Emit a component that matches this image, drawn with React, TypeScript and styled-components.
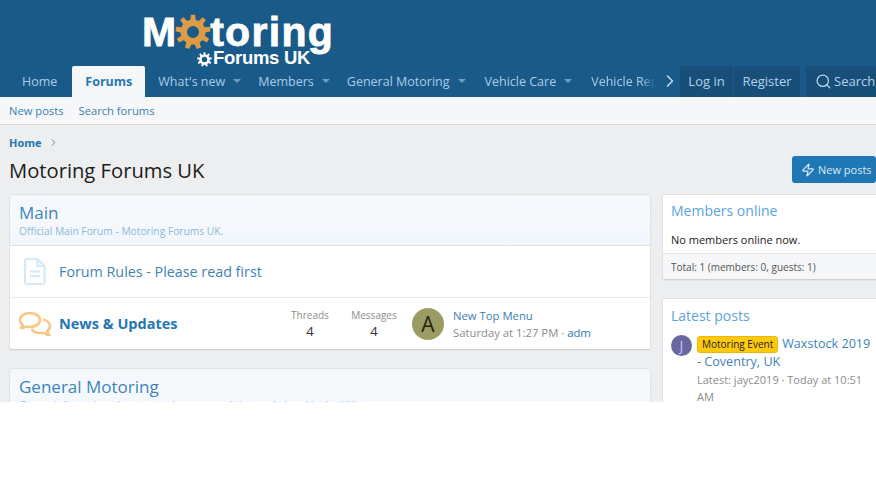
import React from 'react';
import styled, { createGlobalStyle } from 'styled-components';
import { Search, Zap, ChevronRight, ChevronRight as Crumb } from 'lucide-react';

const Global = createGlobalStyle`
  html, body { margin: 0; padding: 0; background: #fff; }
  body { font-family: "Open Sans", "Liberation Sans", sans-serif; font-size: 13px; color: #1c1c1c; }
  * { box-sizing: border-box; }
`;

const Page = styled.div`
  width: 876px;
  height: 402px;
  overflow: hidden;
  background: #eceef0;
`;
const Masthead = styled.header`
  background: #1a5a89;
  height: 97px;
  display: flex;
  flex-direction: column;
`;
const LogoRow = styled.div`
  height: 66px;
  flex: none;
  padding: 9px 0 0 142px;
  position: relative;
  z-index: 2;
  pointer-events: none;
`;
const LogoMain = styled.div`
  display: flex;
  align-items: flex-start;
  height: 41px;
  font: 700 41px/46px "Liberation Sans", Arial, sans-serif;
  color: #fff;
  -webkit-text-stroke: 0.8px #fff;
`;
const LogoGear = styled.svg`
  flex: none;
  width: 36px;
  height: 36px;
  margin: 5px -1px 0 -1px;
`;
const LogoWord = styled.span`
  letter-spacing: 1.3px;
`;
const LogoSub = styled.div`
  display: flex;
  align-items: flex-start;
  gap: 1px;
  margin: 0 0 0 55px;
  font: 700 18.5px/15px "Liberation Sans", Arial, sans-serif;
  letter-spacing: -0.3px;
  color: #fff;
`;
const SmallGear = styled.svg`
  width: 15px;
  height: 15px;
  flex: none;
  margin-top: 2px;
`;
const NavBar = styled.nav`
  height: 31px;
  display: flex;
  align-items: stretch;
  position: relative;
`;
const NavScroll = styled.div`
  width: 647px;
  margin-left: 9px;
  flex: none;
  display: flex;
  overflow: hidden;
  white-space: nowrap;
`;
const NavItem = styled.a<{ $active?: boolean; $after?: number }>`
  flex: none;
  display: flex;
  align-items: center;
  height: 31px;
  padding: 0 13px 1px;
  font-size: 12.5px;
  font-weight: ${p => (p.$active ? 700 : 400)};
  color: ${p => (p.$active ? '#2577b1' : '#a9cce6')};
  background: ${p => (p.$active ? '#f5f7f8' : 'transparent')};
  border-radius: 2px 2px 0 0;
  margin-right: ${p => p.$after ?? 1}px;
`;
const Caret = styled.i`
  width: 0;
  height: 0;
  margin: 0 -10px 0 8px;
  border-left: 4px solid transparent;
  border-right: 4px solid transparent;
  border-top: 4px solid #6f9dbf;
`;
const Fade = styled.span`
  display: inline-block;
  width: 64px;
  overflow: hidden;
  -webkit-mask-image: linear-gradient(to right, #000 80%, transparent 100%);
  mask-image: linear-gradient(to right, #000 80%, transparent 100%);
`;
const NavArrow = styled.div`
  width: 24px;
  flex: none;
  display: flex;
  align-items: center;
  justify-content: center;
  padding: 0 0 1px 4px;
  color: #c4dcee;
`;
const UserGroup = styled.div`
  display: flex;
  gap: 1px;
`;
const UserLink = styled.a<{ $wide?: number }>`
  height: 31px;
  width: ${p => p.$wide}px;
  display: flex;
  align-items: center;
  justify-content: center;
  gap: 2px;
  padding-bottom: 1px;
  background: #174f79;
  color: #b5d2e8;
  font-size: 13px;
  border-radius: 2px 2px 0 0;
  flex: none;
  white-space: nowrap;
`;
const SearchLink = styled(UserLink)`
  margin-left: 6px;
  justify-content: flex-start;
  padding-left: 9px;
  overflow: hidden;
`;
const SubNav = styled.div`
  height: 28px;
  background: #f5f7f8;
  border-bottom: 1px solid #d8d8d8;
  display: flex;
  align-items: center;
  gap: 15px;
  padding: 0 0 1px 9px;
  font-size: 11.2px;
  color: #3c7fb4;
`;
const Body = styled.main`
  width: 920px;
  padding: 0 0 0 9px;
`;
const Crumbs = styled.div`
  display: flex;
  align-items: center;
  gap: 6px;
  height: 17px;
  margin-top: 9px;
  font-size: 11px;
  font-weight: 700;
  color: #2577b1;
`;
const TitleRow = styled.div`
  display: flex;
  align-items: center;
  justify-content: space-between;
  width: 867px;
  height: 27px;
  margin-top: 5px;
`;
const Title = styled.h1`
  margin: 0;
  padding-top: 1px;
  font-size: 20.2px;
  font-weight: 400;
  color: #1c1c1c;
`;
const Primary = styled.a`
  width: 84px;
  height: 27px;
  flex: none;
  display: flex;
  align-items: center;
  gap: 3px;
  padding-left: 9px;
  background: #1f77b4;
  border-radius: 3px;
  color: #dbeaf6;
  font-size: 11px;
  white-space: nowrap;
`;
const Columns = styled.div`
  display: grid;
  grid-template-columns: 642px 250px;
  column-gap: 11px;
  align-items: start;
  margin-top: 11px;
`;
const Stack = styled.div`
  display: flex;
  flex-direction: column;
  gap: 18px;
`;
const Block = styled.section`
  background: #fff;
  border: 1px solid #e2e2e2;
  border-bottom-color: #d2d2d2;
  border-radius: 3px;
  box-shadow: 0 1px 1px rgba(0, 0, 0, 0.05);
`;
const BlockHead = styled.div`
  height: 51px;
  padding: 6px 9px 0;
  background: linear-gradient(#f2f7fc, #f7fafd 40%, #eff6fd);
  border-bottom: 1px solid #e2e2e2;
`;
const BlockTitle = styled.h2`
  margin: 0;
  font-size: 17px;
  line-height: 23px;
  font-weight: 400;
  color: #3d85bd;
`;
const BlockDesc = styled.div`
  font-size: 10.25px;
  line-height: 15px;
  color: #8db8d9;
`;
const Row = styled.div<{ $h: number }>`
  height: ${p => p.$h}px;
  display: flex;
  align-items: center;
  & + & { border-top: 1px solid #ececec; }
`;
const RowIcon = styled.div`
  width: 49px;
  flex: none;
  display: flex;
  justify-content: center;
`;
const RowLink = styled.a<{ $bold?: boolean }>`
  flex: 1;
  font-size: ${p => (p.$bold ? '14.5px' : '14.3px')};
  font-weight: ${p => (p.$bold ? 700 : 400)};
  color: ${p => (p.$bold ? '#2577b1' : '#3c84bb')};
`;
const Stat = styled.div`
  width: 64px;
  flex: none;
  text-align: center;
`;
const StatLabel = styled.div`
  font-size: 10px;
  line-height: 15px;
  color: #8c8c8c;
`;
const StatValue = styled.div`
  font-size: 13px;
  line-height: 16px;
  color: #333;
`;
const Avatar = styled.div<{ $size: number; $bg: string; $fg: string }>`
  width: ${p => p.$size}px;
  height: ${p => p.$size}px;
  border-radius: 50%;
  background: ${p => p.$bg};
  color: ${p => p.$fg};
  font-size: ${p => Math.round(p.$size * 0.66)}px;
  flex: none;
  display: flex;
  align-items: center;
  justify-content: center;
`;
const LastPost = styled.div`
  width: 206px;
  flex: none;
  padding-left: 9px;
  font-size: 11.3px;
  line-height: 17px;
`;
const PostLink = styled.div`
  color: #3c7fb4;
`;
const Muted = styled.div`
  color: #8c8c8c;
`;
const Accent = styled.span`
  color: #2577b1;
`;
const AvatarSlot = styled.div`
  margin-left: 6px;
`;
const SideTitle = styled.h3<{ $top: number }>`
  margin: 0;
  padding: ${p => p.$top}px 8px 0;
  font-size: 14px;
  line-height: 21px;
  font-weight: 400;
  color: #5ba4dc;
`;
const SideText = styled.div`
  padding: 10px 8px 0;
  height: 32px;
  font-size: 11px;
  line-height: 17px;
  color: #222;
`;
const SideFoot = styled.div`
  height: 26px;
  padding: 0 8px;
  display: flex;
  align-items: center;
  background: #f6f7f8;
  border-top: 1px solid #e4e4e4;
  font-size: 10px;
  color: #555;
`;
const PostItem = styled.div`
  display: flex;
  gap: 5px;
  padding: 9px 0 0 8px;
`;
const PostText = styled.div`
  width: 178px;
  font-size: 12.6px;
  line-height: 18px;
  color: #3c84bb;
`;
const Badge = styled.span`
  display: inline-block;
  background: #ffc90e;
  border: 1px solid #e8b90c;
  border-radius: 3px;
  color: #222;
  font-size: 10px;
  line-height: 15px;
  padding: 0 4px;
  margin: -2px 4px -2px 0;
`;
const PostMeta = styled.div`
  width: 176px;
  font-size: 11px;
  line-height: 17px;
  color: #8c8c8c;
`;

function gearPath(cx: number, cy: number, outer: number, root: number, hole: number, teeth: number) {
  const pts: string[] = [];
  const step = (Math.PI * 2) / teeth;
  for (let i = 0; i < teeth; i++) {
    const a = i * step - Math.PI / 2;
    const spec: [number, number][] = [
      [root, a - step * 0.3],
      [outer, a - step * 0.18],
      [outer, a + step * 0.18],
      [root, a + step * 0.3],
    ];
    spec.forEach(([r, t]) => pts.push(`${(cx + r * Math.cos(t)).toFixed(2)} ${(cy + r * Math.sin(t)).toFixed(2)}`));
  }
  const ring = `M${cx - hole} ${cy}a${hole} ${hole} 0 1 0 ${hole * 2} 0a${hole} ${hole} 0 1 0 ${-hole * 2} 0Z`;
  return `M${pts.join('L')}Z${ring}`;
}

const FileIcon = () => (
  <svg width="22" height="29" viewBox="0 0 22 28" fill="none" stroke="#d6e9f8" strokeWidth="2.2">
    <path d="M2.500 1.500h11l7 7v16.500a1.500 1.500 0 0 1-1.500 1.500H2.500A1.500 1.500 0 0 1 1 25V3a1.500 1.500 0 0 1 1.500-1.500Z" />
    <path d="M13.500 1.500v7h7" />
    <path d="M6 14h10M6 18.500h10" />
  </svg>
);
const ChatIcon = () => (
  <svg width="34" height="26" viewBox="0 0 34 26" fill="none" stroke="#f9c785" strokeWidth="2.6" strokeLinejoin="round">
    <path d="M12 2C6 2 2 5.200 2 9c0 2 1 3.700 2.800 5-.4 1.300-1 2.200-2 3 2 0 3.800-.6 5-1.600 1.300.4 2.700.6 4.200.6 5.800 0 10-3.200 10-7S17.800 2 12 2Z" />
    <path d="M25 8.500c4 .8 7 3.400 7 6.500 0 2-1 3.700-2.800 5 .3 1.500 1 2.800 2.300 4-2.500 0-4.500-1-5.800-2.300-1 .2-2.100.3-3.200.3-4 0-7.500-1.600-9-4.200" />
  </svg>
);

export default function App() {
  return (
    <Page>
      <Global />
      <Masthead>
        <LogoRow>
          <LogoMain>
            <span>M</span>
            <LogoGear viewBox="0 0 36 36">
              <path fillRule="evenodd" fill="#dd9b48" d={gearPath(18, 18, 17.5, 12.5, 6, 9)} />
            </LogoGear>
            <LogoWord>toring</LogoWord>
          </LogoMain>
          <LogoSub>
            <SmallGear viewBox="0 0 36 36">
              <path fillRule="evenodd" fill="#fff" d={gearPath(18, 18, 17.5, 12.5, 6.5, 9)} />
            </SmallGear>
            Forums UK
          </LogoSub>
        </LogoRow>
        <NavBar>
          <NavScroll>
            <NavItem $after={2}>Home</NavItem>
            <NavItem $active $after={0}>Forums</NavItem>
            <NavItem>What's new<Caret /></NavItem>
            <NavItem>Members<Caret /></NavItem>
            <NavItem $after={3}>General Motoring<Caret /></NavItem>
            <NavItem $after={3}>Vehicle Care<Caret /></NavItem>
            <NavItem><Fade>Vehicle Repairs</Fade></NavItem>
          </NavScroll>
          <NavArrow><ChevronRight size={20} strokeWidth={1.8} /></NavArrow>
          <UserGroup>
            <UserLink $wide={53}>Log in</UserLink>
            <UserLink $wide={66}>Register</UserLink>
          </UserGroup>
          <SearchLink $wide={70}><Search size={17} strokeWidth={1.8} />Search</SearchLink>
        </NavBar>
      </Masthead>
      <SubNav>
        <span>New posts</span>
        <span>Search forums</span>
      </SubNav>
      <Body>
        <Crumbs>Home <Crumb size={11} color="#777" /></Crumbs>
        <TitleRow>
          <Title>Motoring Forums UK</Title>
          <Primary><Zap size={14} strokeWidth={2} />New posts</Primary>
        </TitleRow>
        <Columns>
          <Stack>
            <Block>
              <BlockHead>
                <BlockTitle>Main</BlockTitle>
                <BlockDesc>Official Main Forum - Motoring Forums UK.</BlockDesc>
              </BlockHead>
              <Row $h={51}>
                <RowIcon><FileIcon /></RowIcon>
                <RowLink>Forum Rules - Please read first</RowLink>
              </Row>
              <Row $h={52}>
                <RowIcon><ChatIcon /></RowIcon>
                <RowLink $bold>News &amp; Updates</RowLink>
                <Stat><StatLabel>Threads</StatLabel><StatValue>4</StatValue></Stat>
                <Stat><StatLabel>Messages</StatLabel><StatValue>4</StatValue></Stat>
                <AvatarSlot><Avatar $size={32} $bg="#9b9b64" $fg="#23230f">A</Avatar></AvatarSlot>
                <LastPost>
                  <PostLink>New Top Menu</PostLink>
                  <Muted>Saturday at 1:27 PM · <Accent>adm</Accent></Muted>
                </LastPost>
              </Row>
            </Block>
            <Block>
              <BlockHead>
                <BlockTitle>General Motoring</BlockTitle>
                <BlockDesc>General discussion about motoring, cars and the road ahead in the UK.</BlockDesc>
              </BlockHead>
            </Block>
          </Stack>
          <Stack>
            <Block>
              <SideTitle $top={5}>Members online</SideTitle>
              <SideText>No members online now.</SideText>
              <SideFoot>Total: 1 (members: 0, guests: 1)</SideFoot>
            </Block>
            <Block>
              <SideTitle $top={6}>Latest posts</SideTitle>
              <PostItem>
                <Avatar $size={21} $bg="#6667a3" $fg="#c9c9e6">J</Avatar>
                <div>
                  <PostText><Badge>Motoring Event</Badge>Waxstock 2019 - Coventry, UK</PostText>
                  <PostMeta>Latest: jayc2019 · Today at 10:51 AM</PostMeta>
                </div>
              </PostItem>
            </Block>
          </Stack>
        </Columns>
      </Body>
    </Page>
  );
}
